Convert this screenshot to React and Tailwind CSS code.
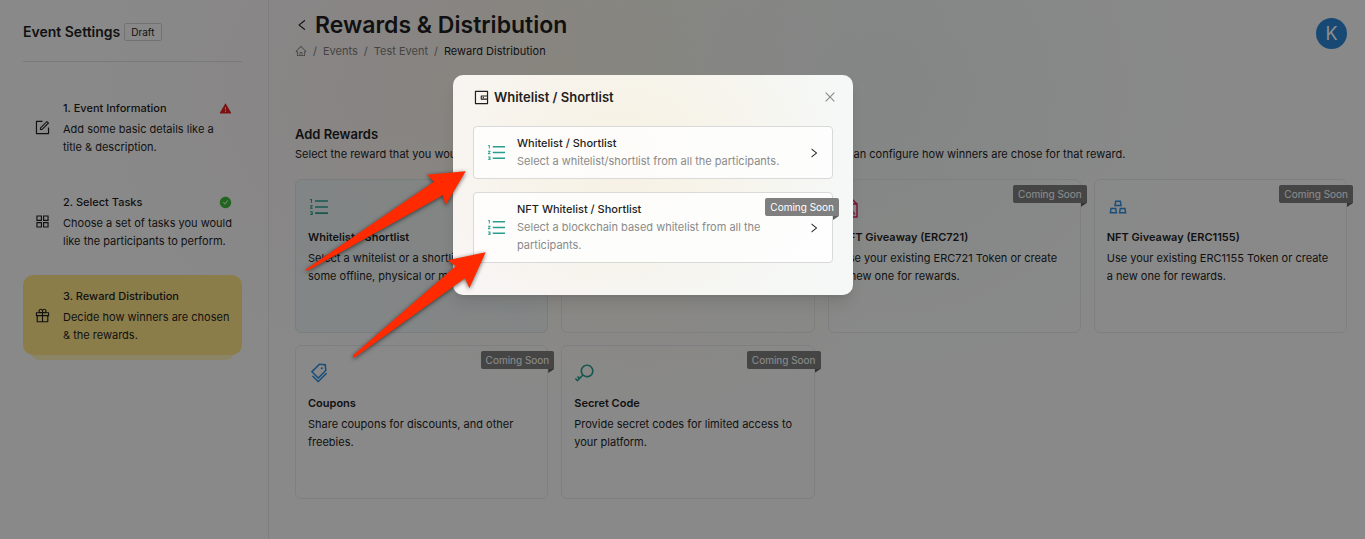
import {
  AiOutlineForm, AiOutlineAppstore, AiOutlineGift, AiFillWarning, AiFillCheckCircle, AiOutlineHome,
  AiOutlineLeft, AiOutlineRight, AiOutlineWallet, AiOutlineClose, AiOutlineOrderedList, AiOutlineTags,
  AiOutlineKey, AiOutlineGold,
} from "react-icons/ai";

function FramedPicture({ className }) {
  return (
    <svg viewBox="0 0 22 22" fill="none" stroke="currentColor" strokeWidth="1.5" className={className} aria-hidden="true">
      <path d="M1.5 8h14.5v13H1.5zM1.5 8l7.25-7L16 8" />
      <path d="M4 18l3-4 2.5 2.5 1.8-2L14 18z" strokeWidth="1" />
    </svg>
  );
}

const steps = [
  { title: "1. Event Information", text: "Add some basic details like a title & description.", Icon: AiOutlineForm, status: "warning" },
  { title: "2. Select Tasks", text: "Choose a set of tasks you would like the participants to perform.", Icon: AiOutlineAppstore, status: "done" },
  { title: "3. Reward Distribution", text: "Decide how winners are chosen & the rewards.", Icon: AiOutlineGift, active: true },
];

const rewards = [
  { id: "whitelist", title: "Whitelist / Shortlist", text: "Select a whitelist or a shortlist to provide some offline, physical or manual rewards.", Icon: AiOutlineOrderedList, color: "text-[#2a9d8f]", selected: true },
  { id: "empty" },
  { id: "erc721", title: "NFT Giveaway (ERC721)", text: "Use your existing ERC721 Token or create a new one for rewards.", Icon: FramedPicture, color: "text-[#e0246a]", soon: true },
  { id: "erc1155", title: "NFT Giveaway (ERC1155)", text: "Use your existing ERC1155 Token or create a new one for rewards.", Icon: AiOutlineGold, color: "text-[#2e8fe0]", soon: true },
  { id: "coupons", title: "Coupons", text: "Share coupons for discounts, and other freebies.", Icon: AiOutlineTags, color: "text-[#2e8fe0]", soon: true },
  { id: "code", title: "Secret Code", text: "Provide secret codes for limited access to your platform.", Icon: AiOutlineKey, color: "text-[#2a9d8f]", soon: true },
];

const options = [
  { title: "Whitelist / Shortlist", text: "Select a whitelist/shortlist from all the participants." },
  { title: "NFT Whitelist / Shortlist", text: "Select a blockchain based whitelist from all the participants.", soon: true },
];

function Ribbon() {
  return (
    <span className="absolute -right-[7px] top-[5px] h-[18px] rounded-t-xs rounded-bl-xs bg-[#7f7f7f] px-[5px] text-[10px] leading-[18px] text-white">
      Coming Soon
      <span className="absolute right-0 top-full h-1 w-1.5 bg-[#5f5f5f] [clip-path:polygon(0_0,100%_0,0_100%)]" />
    </span>
  );
}

function Step({ title, text, Icon, status, active }) {
  return (
    <li className="relative">
      {active && <span className="absolute inset-x-2 -bottom-[5px] h-4 rounded-b-lg bg-[#fdf0b9]" />}
      <a href="#step" className={active ? "relative flex items-center gap-3 rounded-[10px] bg-[#fde387] pb-[11px] pl-[11px] pr-[9px] pt-3" : "relative flex items-center gap-3 pb-[11px] pl-[11px] pr-[9px] pt-3"}>
        <Icon className="size-[17px] shrink-0" />
        <span className="flex-1">
          <span className="flex items-center justify-between pr-px text-[11px] font-medium leading-[18px]">
            {title}
            {status === "warning" && <AiFillWarning className="size-[13px] text-[#e02020]" />}
            {status === "done" && <AiFillCheckCircle className="size-[13px] text-[#3db83d]" />}
          </span>
          <span className="mt-[3px] block text-[11px] leading-[18px]">{text}</span>
        </span>
      </a>
    </li>
  );
}

function RewardCard({ title, text, Icon, color, soon, selected }) {
  return (
    <article className={selected ? "relative h-[154px] rounded-md border border-[#dde3e6] bg-[#e6f2f1]/60 px-3 py-4" : "relative h-[154px] rounded-md border border-[#e6e8ea] px-3 py-4"}>
      {Icon && <Icon className={`size-[22px] ${color}`} />}
      {title && <h3 className="mt-2 text-[11px] font-semibold leading-[22px]">{title}</h3>}
      {text && <p className="mt-px pr-1 text-[11px] leading-[18px]">{text}</p>}
      {soon && <Ribbon />}
    </article>
  );
}

function Option({ title, text, soon }) {
  return (
    <button type="button" className="relative flex w-full items-center gap-[10px] rounded border border-[#d9d9d9] bg-white/80 px-3 py-2 text-left">
      <AiOutlineOrderedList className="size-[21px] shrink-0 text-[#2a9d8f]" />
      <span className="flex-1">
        <span className="block text-[11px] font-medium leading-[17px]">{title}</span>
        <span className="block text-[11px] leading-[18px] text-[#8a8a8a]">{text}</span>
      </span>
      <AiOutlineRight className="size-3 shrink-0" />
      {soon && <Ribbon />}
    </button>
  );
}

export default function App() {
  return (
    <div className="relative min-h-screen overflow-hidden bg-[#fafafa] font-[Inter,sans-serif] text-[#1f1f1f]">
      <div className="flex min-h-screen bg-[radial-gradient(ellipse_340px_310px_at_880px_90px,#f0f5f4,#f0f5f400),radial-gradient(ellipse_340px_320px_at_640px_100px,#f6f2e2,#f6f2e200),radial-gradient(ellipse_320px_300px_at_390px_90px,#f6f0f0,#f6f0f000)]">
        <aside className="w-[269px] shrink-0 border-r border-[#e6e6e6] pl-[23px] pr-[26px] pt-[22px]">
          <div className="flex items-center gap-1 border-b border-[#dedede] pb-[19px]">
            <h2 className="text-[14px] font-semibold leading-5">Event Settings</h2>
            <span className="rounded-xs border border-[#d0d0d0] px-1.5 text-[10px] leading-4">Draft</span>
          </div>
          <ol className="mt-[25px] flex flex-col gap-[14px]">
            {steps.map((s) => <Step key={s.title} {...s} />)}
          </ol>
        </aside>
        <main className="min-w-0 flex-1 pl-[26px] pr-[18px] pt-3">
          <header className="flex items-start justify-between">
            <div>
              <div className="flex items-center gap-1.5">
                <a href="#back" aria-label="Back"><AiOutlineLeft className="size-3.5" /></a>
                <h1 className="text-[23px] font-semibold leading-[26px]">Rewards &amp; Distribution</h1>
              </div>
              <nav aria-label="Breadcrumb" className="mt-1 flex items-center gap-1.5 text-[11px] leading-[18px] text-[#7d7d7d]">
                <a href="#home" aria-label="Home"><AiOutlineHome className="size-3" /></a>
                <span>/</span><a href="#events">Events</a>
                <span>/</span><a href="#test">Test Event</a>
                <span>/</span><span className="text-[#1f1f1f]">Reward Distribution</span>
              </nav>
            </div>
            <div className="mt-1.5 flex size-[31px] items-center justify-center rounded-full bg-[#2a86d4] text-lg text-white">K</div>
          </header>
          <h2 className="mt-[65px] text-[13px] font-semibold leading-[18px]">Add Rewards</h2>
          <p className="mt-[2px] text-[11px] leading-[18px]">Select the reward that you would like to provide to the participants. Once you have selected a reward, you can configure how winners are chose for that reward.</p>
          <div className="mt-4 grid grid-cols-4 gap-x-[13px] gap-y-3">
            {rewards.map((r) => <RewardCard key={r.id} {...r} />)}
          </div>
        </main>
      </div>
      <div className="absolute inset-0 bg-black/45" />
      <div className="absolute inset-x-0 top-[75px] flex justify-center">
        <section role="dialog" aria-label="Whitelist / Shortlist" className="mr-[59px] w-[400px] rounded-[10px] bg-[#f7f8f6] bg-[radial-gradient(ellipse_220px_180px_at_170px_80px,#f7f1e2,transparent),linear-gradient(90deg,#f8f5f4,#f5f8f6)] px-5 pb-8 pt-3 shadow-lg">
          <header className="flex items-center gap-1">
            <AiOutlineWallet className="size-[17px]" />
            <h2 className="flex-1 text-[13px] font-semibold leading-5">Whitelist / Shortlist</h2>
            <button type="button" aria-label="Close" className="-mr-1"><AiOutlineClose className="size-3.5 text-[#8a8a8a]" /></button>
          </header>
          <div className="mt-[19px] flex flex-col gap-[13px]">
            {options.map((o) => <Option key={o.title} {...o} />)}
          </div>
        </section>
      </div>
      <svg viewBox="0 0 190 200" aria-hidden="true" className="pointer-events-none absolute left-[300px] top-[160px] h-[200px] w-[190px] drop-shadow-[0_1px_2px_rgba(0,0,0,0.6)]">
        <g fill="#ff2a00">
          <path d="M6 109.3 L134 21.7 L127 14.7 L165.7 11.3 L145.7 45 L142.7 35.3 L7.5 110.8 Q5.6 111 6 109.3Z" />
          <path d="M52.9 195.6 L155.7 106.3 L147.7 100.3 L185.7 92.3 L169.3 128.3 L165 118.3 L54.6 197.4 Q52.3 198 52.9 195.6Z" />
        </g>
      </svg>
    </div>
  );
}
